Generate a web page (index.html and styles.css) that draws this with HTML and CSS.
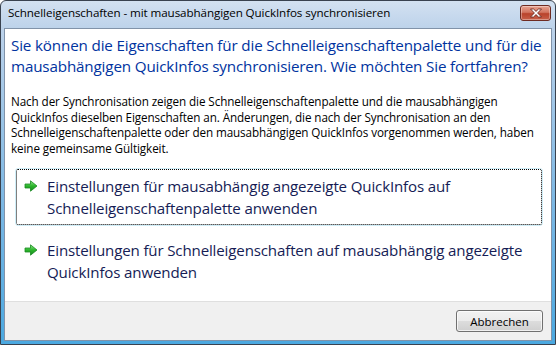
FILE: index.html
```html
<!DOCTYPE html>
<html lang="de">
<head>
<meta charset="utf-8">
<link rel="stylesheet" href="styles.css">
</head>
<body>
<div class="window">
  <div class="titlebar">
    <span class="title">Schnelleigenschaften - mit mausabhängigen QuickInfos synchronisieren</span>
    <button class="close" aria-label="Schließen">
      <svg width="14" height="10" viewBox="0 0 14 10"><path d="M1.5 1 L4.5 1 L7 3.4 L9.5 1 L12.5 1 L8.6 5 L12.5 9 L9.5 9 L7 6.6 L4.5 9 L1.5 9 L5.4 5 Z" fill="#fff" stroke="#6d2a22" stroke-width="0.9" stroke-linejoin="round"/></svg>
    </button>
  </div>
  <div class="client">
    <div class="content">
      <h1 class="instruction">Sie können die Eigenschaften für die Schnelleigenschaftenpalette und für die<br>mausabhängigen QuickInfos synchronisieren. Wie möchten Sie fortfahren?</h1>
      <p class="info">Nach der Synchronisation zeigen die Schnelleigenschaftenpalette und die mausabhängigen<br>QuickInfos dieselben Eigenschaften an. Änderungen, die nach der Synchronisation an den<br>Schnelleigenschaftenpalette oder den mausabhängigen QuickInfos vorgenommen werden, haben<br>keine gemeinsame Gültigkeit.</p>
      <div class="links">
        <button class="cmdlink focused">
          <svg class="arrow" width="14" height="12" viewBox="0 0 14 12"><defs><linearGradient id="g1" x1="0" y1="0" x2="0" y2="1"><stop offset="0" stop-color="#8ae884"/><stop offset="0.5" stop-color="#2cb52c"/><stop offset="1" stop-color="#168a1c"/></linearGradient></defs><path d="M1 4 H6.5 V0.8 L13 6 L6.5 11.2 V8 H1 Z" fill="url(#g1)" stroke="#1a8a22" stroke-width="0.8" stroke-linejoin="round"/></svg>
          <span class="cmdtext">Einstellungen für mausabhängig angezeigte QuickInfos auf<br>Schnelleigenschaftenpalette anwenden</span>
        </button>
        <button class="cmdlink">
          <svg class="arrow" width="14" height="12" viewBox="0 0 14 12"><defs><linearGradient id="g2" x1="0" y1="0" x2="0" y2="1"><stop offset="0" stop-color="#8ae884"/><stop offset="0.5" stop-color="#2cb52c"/><stop offset="1" stop-color="#168a1c"/></linearGradient></defs><path d="M1 4 H6.5 V0.8 L13 6 L6.5 11.2 V8 H1 Z" fill="url(#g2)" stroke="#1a8a22" stroke-width="0.8" stroke-linejoin="round"/></svg>
          <span class="cmdtext">Einstellungen für Schnelleigenschaften auf mausabhängig angezeigte<br>QuickInfos anwenden</span>
        </button>
      </div>
    </div>
    <div class="footer">
      <button class="btn">Abbrechen</button>
    </div>
  </div>
</div>
</body>
</html>
```

FILE: styles.css
```css
* { box-sizing: border-box; }
html, body { margin: 0; padding: 0; }
body {
  width: 556px;
  height: 345px;
  overflow: hidden;
  font-family: "Open Sans", "Noto Sans", sans-serif;
  background: #fff;
}
.window {
  width: 556px;
  height: 345px;
  display: flex;
  flex-direction: column;
  border: 1px solid #39424f;
  border-radius: 6px 6px 0 0;
  background: linear-gradient(180deg, #d3e1f1 0px, #bcd2ea 28px, #7db8e4 200px, #4aa8e0 345px);
  padding: 0 3px 3px 3px;
}
.titlebar {
  height: 27px;
  flex: none;
  display: flex;
  align-items: flex-start;
  justify-content: space-between;
  padding: 5px 1px 0 4px;
}
.title {
  font-size: 11.65px;
  color: #000;
  line-height: 14px;
  letter-spacing: -0.1px;
}
.close {
  width: 31px;
  height: 16px;
  margin-top: -1px;
  padding: 0;
  border: 1px solid #6e2b22;
  border-radius: 3px;
  background: linear-gradient(180deg, #e8a493 0%, #d27560 45%, #b9432b 55%, #c8604a 100%);
  box-shadow: inset 0 0 0 1px rgba(255,255,255,0.35);
  display: flex;
  align-items: center;
  justify-content: center;
}
.client {
  flex: 1;
  display: flex;
  flex-direction: column;
  border: 1px solid #8193a9;
  background: #fff;
}
.content {
  flex: 1;
  padding: 6px 4px 0 6px;
}
.instruction {
  margin: 0;
  font-weight: normal;
  font-size: 15.2px;
  line-height: 21px;
  color: #0033a0;
  letter-spacing: -0.15px;
  white-space: nowrap;
}
.info {
  margin: 17px 0 0 0;
  font-size: 11.7px;
  line-height: 15.5px;
  color: #000;
  letter-spacing: -0.1px;
  white-space: nowrap;
}
.links {
  margin-top: 12px;
  display: flex;
  flex-direction: column;
  gap: 6px;
  padding-left: 4px;
}
.cmdlink {
  width: 528px;
  display: flex;
  align-items: flex-start;
  gap: 9px;
  padding: 6px 8px 6px 8px;
  border: 1px solid transparent;
  border-radius: 3px;
  background: transparent;
  text-align: left;
  font-family: inherit;
  cursor: pointer;
}
.cmdlink.focused {
  border-color: #cfeef8;
  outline: 1px dotted #000;
  outline-offset: -2px;
}
.arrow {
  flex: none;
  margin-top: 5px;
}
.cmdtext {
  font-size: 15.1px;
  line-height: 22px;
  color: #151c55;
  letter-spacing: -0.15px;
  white-space: nowrap;
}
.footer {
  flex: none;
  height: 39px;
  background: #f0f0f0;
  border-top: 1px solid #dfdfdf;
  display: flex;
  align-items: center;
  justify-content: flex-end;
  padding-right: 8px;
}
.btn {
  width: 87px;
  height: 22px;
  padding: 0;
  border: 1px solid #707070;
  border-radius: 3px;
  background: linear-gradient(180deg, #f2f2f2 0%, #ebebeb 50%, #dddddd 50%, #cfcfcf 100%);
  box-shadow: inset 0 0 0 1px rgba(255,255,255,0.7);
  font-family: inherit;
  font-size: 11.5px;
  color: #000;
}
```
